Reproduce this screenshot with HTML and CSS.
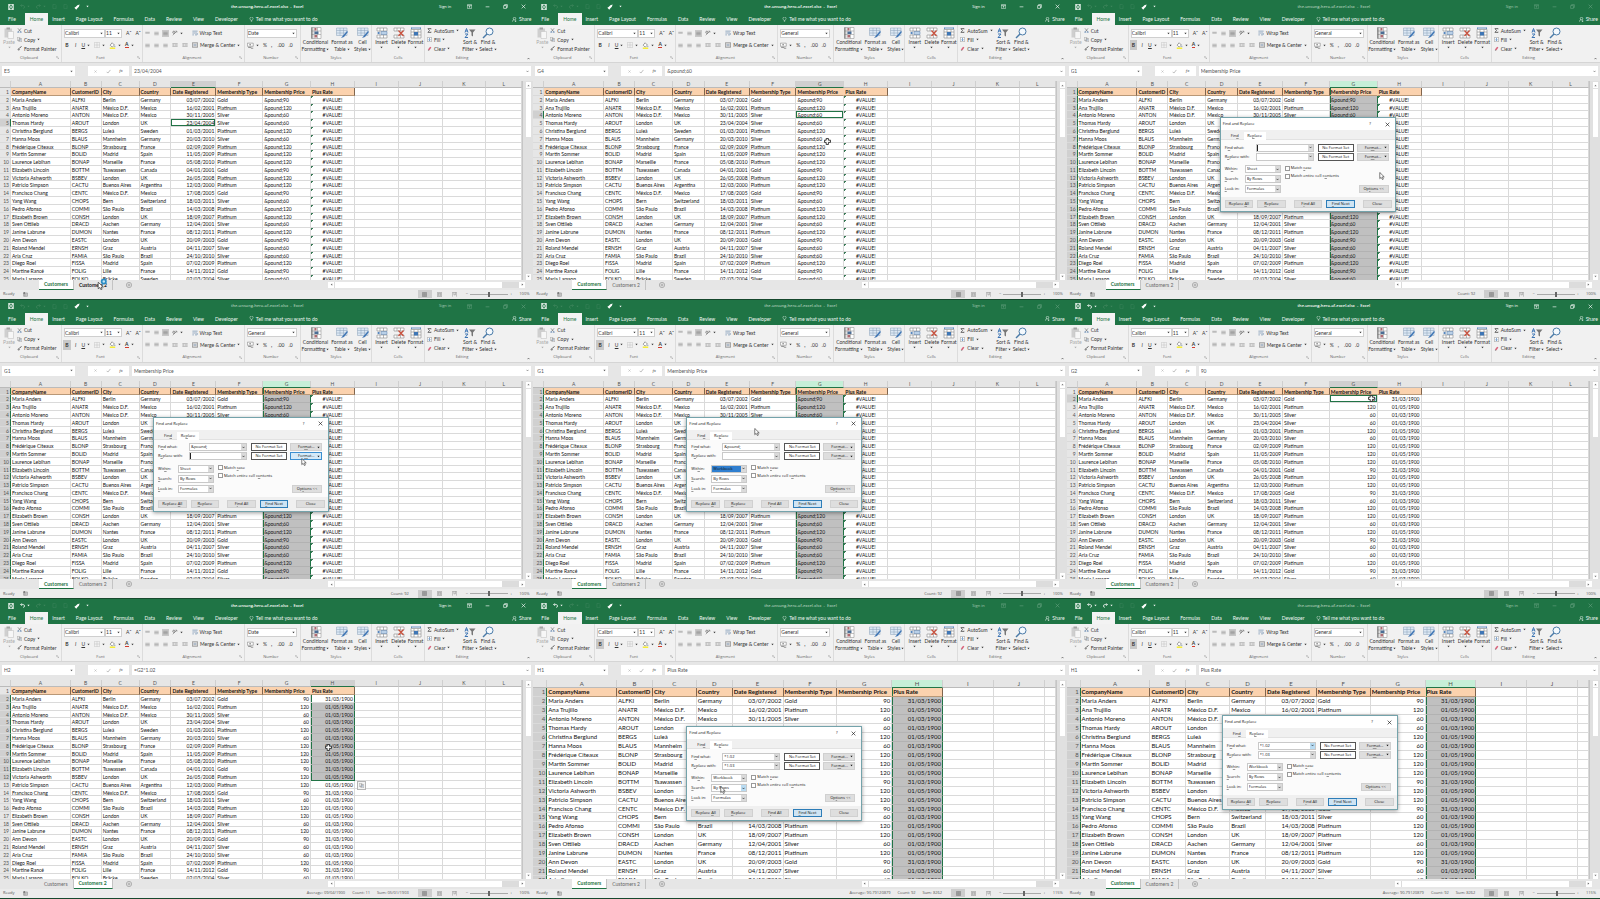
FILE: index.html
```html
<!DOCTYPE html>
<html lang="en">
<head>
    <meta charset="UTF-8">
    <meta name="viewport" content="width=device-width">
    <title>the-unsung-hero-of-excel.xlsx - Excel</title>
    <link rel="stylesheet" href="styles.css">
</head>
<body>

<svg class="sprite" aria-hidden="true">
    <symbol id="save" viewBox="0 0 16 16"><path d="M1 1h14v14H1z M4 1v5h8V1 M4 15v-5h8v5" fill="none" stroke="currentColor" stroke-width="2"/></symbol>
    <symbol id="undo" viewBox="0 0 16 16"><path d="M6 1L2 5l4 4M2 5h8a4 4 0 0 1 0 9" fill="none" stroke="currentColor" stroke-width="2.4"/></symbol>
    <symbol id="redo" viewBox="0 0 16 16"><path d="M10 1l4 4-4 4M14 5H6a4 4 0 0 0 0 9" fill="none" stroke="currentColor" stroke-width="2.4"/></symbol>
    <symbol id="page" viewBox="0 0 16 16"><path d="M3 1h7l3 4v10H3z" fill="none" stroke="currentColor" stroke-width="1.6"/></symbol>
    <symbol id="brush" viewBox="0 0 16 16"><path d="M15 1L9 3 5 7l4 4 4-4zM5 7L1 10l5 5 3-4z" fill="currentColor"/></symbol>
    <symbol id="caret" viewBox="0 0 8 8"><path d="M1 2h6L4 6z" fill="currentColor"/></symbol>
    <symbol id="chevron" viewBox="0 0 8 8"><path d="M1 2l3 3 3-3" fill="none" stroke="currentColor" stroke-width="1.6"/></symbol>
    <symbol id="ribbonopt" viewBox="0 0 16 16"><path d="M1 2h14v12H1zM1 5h14M8 12V7M5.500 9.500L8 7l2.500 2.500" fill="none" stroke="currentColor" stroke-width="1.600"/></symbol>
    <symbol id="min" viewBox="0 0 16 16"><path d="M2 9h12" stroke="currentColor" stroke-width="2"/></symbol>
    <symbol id="restore" viewBox="0 0 16 16"><path d="M2 5h9v9H2zM5 5V2h9v9h-3" fill="none" stroke="currentColor" stroke-width="2"/></symbol>
    <symbol id="close" viewBox="0 0 16 16"><path d="M2 2l12 12M14 2L2 14" stroke="currentColor" stroke-width="2"/></symbol>
    <symbol id="bulb" viewBox="0 0 12 16"><path d="M4 11c0-2-3-3-3-6a5 5 0 0 1 10 0c0 3-3 4-3 6zM4 14h4" fill="none" stroke="currentColor" stroke-width="1.500"/></symbol>
    <symbol id="person" viewBox="0 0 16 16"><circle cx="8" cy="5" r="4" fill="none" stroke="currentColor" stroke-width="1.800"/><path d="M1 15c0-4 3-6 6-6M11 11v5M14 13h-5" fill="none" stroke="currentColor" stroke-width="1.800"/></symbol>
    <symbol id="paste" viewBox="0 0 20 24"><path d="M1 3h15v18H1z" fill="#cfcfcf"/><path d="M5 1h7v4H5z" fill="#a5a5a5"/><path d="M8 9h11v14H8z" fill="#f7f7f7" stroke="#bdbdbd"/></symbol>
    <symbol id="cut" viewBox="0 0 16 16"><path d="M3 1l8 10M13 1L5 11" stroke="#555" stroke-width="1.600"/><circle cx="4" cy="13" r="2" fill="none" stroke="#4472a8" stroke-width="1.600"/><circle cx="12" cy="13" r="2" fill="none" stroke="#4472a8" stroke-width="1.600"/></symbol>
    <symbol id="copy" viewBox="0 0 16 16"><path d="M1 1h8v10H1zM6 5h9v10H6z" fill="#fff" stroke="#777" stroke-width="1.400"/><path d="M8 8h5M8 11h5" stroke="#4472a8"/></symbol>
    <symbol id="painter" viewBox="0 0 16 16"><path d="M14 1L7 8" stroke="#444" stroke-width="3"/><path d="M5 6l5 4-4 5-5-3z" fill="#8a8a8a"/></symbol>
    <symbol id="lines" viewBox="0 0 16 12"><path d="M1 2h14M1 6h14M1 10h14" stroke="#777" stroke-width="1.500"/></symbol>
    <symbol id="linestop" viewBox="0 0 16 12"><path d="M1 2h14M1 5h14" stroke="#777" stroke-width="1.500"/></symbol>
    <symbol id="angle" viewBox="0 0 16 16"><path d="M2 14L13 3M9 3h4v4" fill="none" stroke="#777" stroke-width="1.600"/><circle cx="5" cy="6" r="3" fill="none" stroke="#555" stroke-width="1.600"/></symbol>
    <symbol id="wrap" viewBox="0 0 16 16"><path d="M1 3h14M1 8h11a2 2 0 0 1 0 5H8M1 13h4" fill="none" stroke="#5b7da5" stroke-width="1.600"/></symbol>
    <symbol id="merge" viewBox="0 0 18 16"><path d="M1 1h16v14H1zM1 5h16M1 11h16" fill="#fff" stroke="#555" stroke-width="1.400"/><path d="M5 8h8" stroke="#4472a8" stroke-width="1.600"/></symbol>
    <symbol id="indent" viewBox="0 0 18 12"><path d="M1 2h16M1 10h16M8 6h9M5 4L2 6l3 2" fill="none" stroke="#777" stroke-width="1.400"/></symbol>
    <symbol id="borders" viewBox="0 0 16 16"><path d="M1 1h14v14H1zM8 1v14M1 8h14" fill="none" stroke="#b5b5b5"/></symbol>
    <symbol id="fill" viewBox="0 0 16 18"><path d="M7 2l6 6-6 5-5-5z" fill="#fff" stroke="#555" stroke-width="1.400"/><path d="M14 9l1.500 3h-3z" fill="#4472a8"/><path d="M1 14h14v4H1z" fill="#f5ec3a"/></symbol>
    <symbol id="coins" viewBox="0 0 18 16"><path d="M1 2h15v8H1z" fill="#fff" stroke="#777" stroke-width="1.400"/><circle cx="8" cy="6" r="2" fill="#777"/><path d="M3 13h8M10 15h6" stroke="#777" stroke-width="2"/></symbol>
    <symbol id="cond" viewBox="0 0 24 24"><path d="M3 1h19v22H3zM8 1v22M15 1v22M3 8h19M3 15h19" fill="#fff" stroke="#999" stroke-width="1.200"/><path d="M9 2h4v5H9zM9 16h5v5H9z" fill="#b06a70"/><path d="M9 9h8v5H9z" fill="#4b6d94"/><path d="M4 1v22" stroke="#666" stroke-width="2"/></symbol>
    <symbol id="ftable" viewBox="0 0 24 24"><path d="M1 2h21v15H1z" fill="#dbe7f3" stroke="#8aa0b8"/><path d="M1 7h21M1 12h21M8 2v15M15 2v15" stroke="#8aa0b8"/><path d="M23 7l-9 10-4 5 6-2 7-9z" fill="#3f76b5"/></symbol>
    <symbol id="insert" viewBox="0 0 24 24"><path d="M2 2h20v6H2zM2 16h20v6H2zM8 2v6M15 2v6M8 16v6M15 16v6" fill="#fff" stroke="#8f8f8f" stroke-width="1.300"/><path d="M10 9h12v6H10z" fill="#b9d0e8" stroke="#5a7ea8"/><path d="M7 9l-5 3 5 3z" fill="#3f76b5"/></symbol>
    <symbol id="delete" viewBox="0 0 24 24"><path d="M2 2h20v6H2zM2 16h20v6H2zM8 2v6M15 2v6M8 16v6M15 16v6" fill="#fff" stroke="#8f8f8f" stroke-width="1.300"/><path d="M11 7l10 11M21 7L11 18" stroke="#c8503c" stroke-width="2.500"/></symbol>
    <symbol id="format" viewBox="0 0 24 24"><path d="M2 5h20v17H2zM2 10h20M2 16h20M8 5v17M16 5v17" fill="#fff" stroke="#8f8f8f" stroke-width="1.300"/><path d="M8 10h8v7H8z" fill="#3f76b5"/><path d="M3 1v3M21 1v3M3 2h18" stroke="#3f76b5" stroke-width="1.500"/></symbol>
    <symbol id="sigma" viewBox="0 0 16 16"><path d="M13 4V2H3l5 6-5 6h10v-2" fill="none" stroke="#333" stroke-width="2.200"/></symbol>
    <symbol id="filldown" viewBox="0 0 16 16"><path d="M1 1h14v14H1z" fill="#fff" stroke="#777" stroke-width="1.500"/><path d="M8 3v8M4.500 8L8 12l3.500-4" fill="none" stroke="#3f76b5" stroke-width="2"/></symbol>
    <symbol id="eraser" viewBox="0 0 16 16"><path d="M10 2l4 3-7 9-4-3z" fill="#d9617a"/><path d="M3 11l4 3-1 1H3z" fill="#888"/></symbol>
    <symbol id="sort" viewBox="0 0 24 24"><path d="M2 11L5 3l3 8M3 8h4M2 14h6l-6 7h6" fill="none" stroke="#3f76b5" stroke-width="2"/><path d="M10 5h13l-5 6v8l-3-2v-6z" fill="#777"/></symbol>
    <symbol id="find" viewBox="0 0 24 24"><circle cx="15" cy="9" r="7" fill="#f4f9fd" stroke="#4a7ba8" stroke-width="2"/><path d="M10 14l-8 8" stroke="#4a7ba8" stroke-width="3"/></symbol>
    <symbol id="launcher" viewBox="0 0 8 8"><path d="M1 5V1h4M3 3l4 4M7 4v3H4" fill="none" stroke="#888"/></symbol>
    <symbol id="check" viewBox="0 0 16 16"><path d="M2 9l4 4 8-10" fill="none" stroke="currentColor" stroke-width="2"/></symbol>
    <symbol id="plus" viewBox="0 0 16 16"><circle cx="8" cy="8" r="7" fill="none" stroke="#888" stroke-width="1.500"/><path d="M8 4v8M4 8h8" stroke="#888" stroke-width="1.500"/></symbol>
    <symbol id="macro" viewBox="0 0 16 16"><path d="M2 3h12v11H2zM2 6h12M6 6v8M2 10h12" fill="none" stroke="#777" stroke-width="1.500"/><circle cx="4" cy="3" r="3" fill="#777"/></symbol>
    <symbol id="gridview" viewBox="0 0 16 16"><path d="M1 1h14v14H1zM1 6h14M1 10h14M6 1v14M10 1v14" fill="none" stroke="#666" stroke-width="1.400"/></symbol>
    <symbol id="pageview" viewBox="0 0 16 16"><path d="M1 1h14v14H1zM4 4h8v8H4zM4 7h8" fill="none" stroke="#777" stroke-width="1.400"/></symbol>
    <symbol id="breakview" viewBox="0 0 16 16"><path d="M1 15V1h14v14M6 1v8h5V1" fill="none" stroke="#777" stroke-width="1.400"/></symbol>
    <symbol id="arrow" viewBox="0 0 12 18"><path d="M1 1v14l3-3 3 5 2-1-2-5h4z" fill="#fff" stroke="#222" stroke-width="1.300"/></symbol>
    <symbol id="cross" viewBox="0 0 16 16"><path d="M5 1h5v4h5v5h-5v5H5v-5H1V5h4z" fill="#fff" stroke="#222" stroke-width="2"/></symbol>
    <symbol id="busy" viewBox="0 0 24 28"><path d="M2 10v15l4-3 2 5 3-1-2-5h5z" fill="#fff" stroke="#222" stroke-width="1.500"/><circle cx="15" cy="8" r="5" fill="#bfe4f5" stroke="#2a8cc4" stroke-width="4"/></symbol>
</svg>

<main class="frames" id="frames"></main>

<script src="script.js"></script>
</body>
</html>
```

FILE: styles.css
```css
* {
    box-sizing: border-box;
}

body {
    margin: 0;
    font-family: Lato, "Open Sans", sans-serif;
    font-size: 5px;
    line-height: 8px;
    color: #333;
}

button, input, select {
    font: inherit;
    color: inherit;
    margin: 0;
    padding: 0;
    border: 0;
    border-radius: 0;
    background: none;
    appearance: none;
    min-width: 0;
    outline: none;
}

button {
    white-space: nowrap;
    display: flex;
    align-items: center;
    justify-content: center;
}

svg {
    display: block;
    flex: none;
}

.sprite {
    position: absolute;
    width: 0;
    height: 0;
}

.frames {
    display: grid;
    grid-template-columns: repeat(3, minmax(0, 1fr));
    grid-template-rows: repeat(3, minmax(0, 1fr));
    height: 100vh;
}

.excel {
    position: relative;
    display: flex;
    flex-direction: column;
    overflow: hidden;
    background: #e6e6e6;
    border-bottom: 1px solid #17492e;
}

/* icon sizes */
.i3 { width: 3px; height: 3px; }
.i5 { width: 5px; height: 5px; }
.i6 { width: 6px; height: 6px; }
.i7 { width: 7px; height: 7px; }
.i12 { width: 12px; height: 12px; }

/* title bar */
.titlebar {
    flex: 0 0 13px;
    display: grid;
    grid-template-columns: 1fr auto 1fr;
    align-items: center;
    padding: 0 7px 0 8px;
    background: #1f7445;
    color: #fff;
    font-family: "Open Sans", sans-serif;
    font-size: 4px;
}

.quick {
    display: flex;
    align-items: center;
    gap: 6px;
}

.quick .off { color: #3f875e; }

.quick button { gap: 2px; }

.doc { font-weight: 600; }

.winbtns {
    display: flex;
    align-items: center;
    justify-content: flex-end;
    gap: 13px;
}

.winbtns .signin { margin-right: 3px; }

.inactive .doc, .inactive .winbtns { color: #a5c9b3; }

.inactive .winbtns svg { opacity: .5; }

/* ribbon tabs */
.tabs {
    flex: 0 0 12px;
    display: flex;
    align-items: stretch;
    gap: 11px;
    padding: 0 2px 0 8px;
    background: #1f7445;
    color: #f0f7f3;
}

.tabs button { flex: none; }

.tabs .home {
    padding: 0 5px;
    margin: 0 -7px 0 -2px;
    background: #f3f3f3;
    color: #1f7445;
}

.tabs .tell, .tabs .share { gap: 2px; }

.tabs .share { margin-left: auto; }

/* ribbon */
.ribbon {
    flex: 0 0 37px;
    display: flex;
    background: #f1f1f1;
    border-bottom: 1px solid #d5d5d5;
}

.group {
    flex: none;
    display: flex;
    flex-direction: column;
    border-right: 1px solid #dcdcdc;
}

.group.clipboard { width: 62px; }
.group.font { width: 81px; }
.group.alignment { width: 102px; }
.group.number { width: 56px; }
.group.styles { width: 71px; }
.group.cells { width: 53px; }
.group.editing { width: 74px; border: 0; }

.gbody {
    flex: 1;
    display: flex;
    padding: 1px 2px 0;
}

.glabel {
    flex: 0 0 9px;
    display: flex;
    align-items: center;
    padding: 0 2px;
    font-family: "Open Sans", sans-serif;
    font-size: 4px;
    color: #666;
}

.glabel span {
    flex: 1;
    text-align: center;
}

.stack {
    display: flex;
    flex-direction: column;
}

.stack button {
    height: 9px;
    justify-content: flex-start;
    gap: 2px;
}

.big {
    flex-direction: column;
    justify-content: flex-start;
    padding-top: 1px;
    line-height: 7px;
}

.big span { display: flex; align-items: center; gap: 1px; }

.clipboard .gbody { padding-left: 1px; }
.clipboard .big { width: 16px; color: #aaa; }
.styles .gbody { padding: 1px 0 0; }
.styles .big { width: 17px; }
.styles .big:nth-child(1) { width: 29px; }
.styles .big:nth-child(2) { width: 24px; }
.cells .gbody { padding: 1px 0 0 1px; }
.cells .big { width: 17px; }
.editing .stack { width: 34px; }
.editing .big { width: 18px; }

.rows {
    flex: 1;
    display: flex;
    flex-direction: column;
    padding-top: 1px;
}

.row {
    height: 12px;
    display: flex;
    align-items: center;
    gap: 4px;
}

.row button { gap: 2px; }

.on { background: #c8c8c8; padding: 1px; margin: -1px; }

.drop {
    display: flex;
    align-items: center;
    height: 9px;
    border: 1px solid #cfcfcf;
    background: #fff;
    padding-right: 1px;
}

.drop select { flex: 1; width: 100%; }

.drop.face { width: 41px; }
.drop.size { width: 17px; margin-left: -4px; }
.drop.kind { width: 50px; }

.red { border-bottom: 1px solid #d23b2c; line-height: 5px; font-weight: bold; }

.collapse { margin: auto 3px 2px auto; transform: rotate(180deg); }

/* formula bar */
.formula {
    flex: 0 0 18px;
    display: flex;
    align-items: center;
    padding: 0 2px 2px;
    gap: 3px;
}

.box {
    display: flex;
    align-items: center;
    height: 10px;
    background: #fff;
    padding: 0 2px;
    color: #555;
}

.box input { flex: 1; width: 100%; }

.box.name { width: 73px; }
.box.fx { width: 41px; margin-left: 10px; justify-content: space-around; color: #999; }
.box.value { flex: 1; }
.fx em { color: #555; font-family: "Liberation Serif", serif; }

/* sheet */
.sheet {
    flex: 1 1 0;
    min-height: 0;
    display: flex;
    overflow: hidden;
}

.table {
    flex: 1;
    min-width: 0;
    display: flex;
    flex-direction: column;
    border-spacing: 0;
    color: #111;
}

.table thead { flex: 0 0 7px; display: block; }

.table tbody {
    flex: 0 0 calc(100% - 4px);
    min-height: 0;
    display: grid;
    grid-auto-rows: minmax(0, 1fr);
    background: #fff;
}

.table tr {
    display: grid;
    grid-template-columns: 11fr 60fr 31fr 38fr 32fr 45fr 47fr 48fr 44fr 44fr 44fr 44fr 36fr;
    grid-template-rows: minmax(0, 1fr);
    min-height: 0;
}

.table th, .table td {
    min-width: 0;
    min-height: 0;
    padding: 0 1px;
    border-right: 1px solid #dadada;
    border-bottom: 1px solid #dadada;
    font-weight: normal;
    text-align: left;
    white-space: nowrap;
    line-height: 8px;
}

.table thead th {
    height: 7px;
    line-height: 6px;
    text-align: center;
    background: #e6e6e6;
    border-right-color: #cfcfcf;
    border-bottom-color: #bbb;
    color: #555;
}

.table tbody th {
    background: #e6e6e6;
    color: #555;
    text-align: right;
}

.table .titles td {
    background: #fbd2ae;
    border-right-color: #80654e;
    border-bottom-color: #b99877;
    font-weight: bold;
}

.table .titles td:nth-child(8) { border-right-color: #fbd2ae; }

.table .titles td.blank {
    background: #fff;
    border-color: #dadada;
}

.table .num { text-align: right; }

.table .err {
    text-align: center;
    background: linear-gradient(135deg, #3b7a57 2px, transparent 2px);
}

.table .picked { background: #c0c0c0; border-bottom-color: #b2b2b2; }

.table .colpick { border-right-color: #217346; box-shadow: inset 1px 0 #217346; }

.table .lastpick { border-bottom-color: #217346; }

.table td.active { box-shadow: inset 0 0 0 1px #217346; }

.table thead .near { background: #d0d0d0; border-bottom-color: #217346; }

.table thead .whole { background: #c6efd8; }

.table tbody th.near { background: #d0d0d0; border-right-color: #217346; }

/* 115% zoom */
.zoomed .table { font-size: 6px; }
.zoomed .table thead { flex-basis: 8px; }
.zoomed .table thead th { height: 8px; line-height: 7px; }
.zoomed .table tbody { flex-basis: calc(100% - 2px); }
.zoomed .table tr { grid-template-columns: 14fr 70fr 36fr 44fr 36fr 51fr 54fr 55fr 51fr 51fr 51fr 11fr; }

.vscroll {
    flex: 0 0 9px;
    display: flex;
    flex-direction: column;
    align-items: center;
    justify-content: space-between;
    padding: 1px 2px 0 3px;
    border-left: 1px solid #c5c5c5;
    background: #e0e0e0;
    color: #777;
}

.vscroll button { width: 5px; height: 6px; background: #fff; }
.vscroll .up svg { transform: rotate(180deg); }
.vscroll .thumb { width: 5px; height: 48px; background: #fff; margin: 1px 0 auto; }

/* sheet tabs */
.sheets {
    flex: 0 0 10px;
    display: flex;
    align-items: center;
    padding: 0 8px 0 39px;
    color: #666;
}

.sheets .tab {
    height: 10px;
    padding: 0 5px;
    border-right: 1px solid #c3c3c3;
}

.sheets .tab.current {
    background: #fff;
    color: #1f7445;
    font-weight: bold;
    border-bottom: 1px solid #1f7445;
}

.sheets .tab.hover { color: #222; font-weight: bold; }

.sheets .add { margin-left: 13px; }

.hscroll {
    width: 197px;
    margin-left: auto;
    display: flex;
    align-items: center;
    justify-content: space-between;
    background: #dcdcdc;
}

.hscroll button { width: 6px; height: 6px; background: #fff; }
.hscroll .left svg { transform: rotate(90deg); }
.hscroll .right svg { transform: rotate(-90deg); }
.hscroll .thumb { width: 167px; height: 6px; background: #fff; margin: 0 auto 0 1px; }

/* status bar */
.status {
    flex: 0 0 9px;
    display: flex;
    align-items: center;
    gap: 9px;
    padding: 0 3px;
    background: #ececec;
    font-family: "Open Sans", sans-serif;
    font-size: 4px;
    color: #555;
}

.status .sums { margin-left: auto; display: flex; gap: 7px; }

.views { display: flex; align-items: center; gap: 1px; }
.views button { width: 14px; height: 8px; }
.views .sel { background: #cdcdcd; }

.zoom { display: flex; align-items: center; gap: 2px; margin-left: -5px; }
.zoom input { width: 38px; height: 8px; background: linear-gradient(#aaa, #aaa) center / 100% 1px no-repeat; }
.zoom input::-webkit-slider-thumb { appearance: none; width: 2px; height: 5px; background: #666; }
.zoom output { margin-left: 5px; width: 11px; }

/* find and replace */
.dialog {
    position: absolute;
    width: 176px;
    background: #fbfbfb;
    border: 1px solid #74a3ab;
    box-shadow: 0 1px 4px rgba(0, 0, 0, .4);
    font-family: "Open Sans", sans-serif;
    font-size: 4px;
    color: #111;
}

.dialog u { text-decoration-color: #999; }

.dialog header {
    display: flex;
    align-items: center;
    height: 12px;
    padding: 0 5px 0 2px;
    background: #fff;
}

.dialog header span { flex: 1; }
.dialog header button { width: 5px; }
.dialog header button + button { margin-left: 12px; }

.dtabs {
    display: flex;
    padding: 2px 5px 0;
    height: 10px;
    background: #f0f0f0;
    border-bottom: 1px solid #e2e2e2;
}

.dtabs button { width: 18px; height: 8px; }
.dtabs .current { width: 22px; background: #fff; }

.dbody { padding: 3px 5px 3px 4px; }

.line { display: flex; align-items: center; height: 9px; }
.line label { width: 31px; white-space: nowrap; }

.combo {
    display: flex;
    align-items: center;
    height: 8px;
    background: #fff;
    border: 1px solid #c9c9c9;
}

.combo input, .combo select { flex: 1; width: 100%; height: 6px; padding: 0 1px; line-height: 6px; }
.combo button { width: 5px; height: 6px; background: #dadada; }
.combo button.lit { background: #b9dcf3; }
.combo.text { width: 58px; }
.combo.text.focus input { border-left: 1px solid #222; }
.combo.pick { width: 36px; }
.combo.pick.lit select { background: #2f7fd0; }

.noformat {
    width: 36px;
    height: 8px;
    margin-left: 4px;
    line-height: 6px;
    border: 1px solid #555;
    background: #fff;
    text-align: center;
    white-space: nowrap;
}

.btn {
    height: 8px;
    background: #dedede;
    border: 1px solid #d0d0d0;
    line-height: 6px;
}

.btn.fmt { width: 32px; margin-left: 3px; justify-content: space-between; padding: 0 1px 0 7px; }
.btn.lit { background: #d5eaf8; border-color: #3c8fd0; }

.opts { display: flex; padding-top: 3px; }
.opts .line { height: 10px; }
.opts .line label { width: 20px; }

.checks { flex: 1; padding-left: 4px; display: flex; flex-direction: column; }
.checks label { display: flex; align-items: center; gap: 1px; height: 8px; white-space: nowrap; }
.checks input { width: 5px; height: 5px; border: 1px solid #999; background: #fff; }
.checks .btn { width: 30px; margin: auto 1px 1px auto; }

.dialog footer {
    display: flex;
    gap: 4px;
    padding: 3px 3px 3px 4px;
    background: #f0f0f0;
}

.dialog footer button { width: 29px; }
.dialog footer button:nth-child(3), .dialog footer button:last-child { margin-left: 4px; }
.dialog footer button:nth-child(4) { background: #cfe4f3; border-color: #2d7db8; }

.cursor { position: absolute; width: 6px; height: 8px; }
.cursor.cross { width: 7px; height: 7px; }
.cursor.busy { width: 11px; height: 12px; }

.pasteopt {
    position: absolute;
    width: 9px;
    height: 9px;
    border: 1px solid #b5b5b5;
    background: #f3f3f3;
}
```

FILE: script.js
```js
const people = `Maria Anders,ALFKI,Berlin,Germany,03/07/2002,Gold
Ana Trujillo,ANATR,México D.F.,Mexico,16/02/2001,Platinum
Antonio Moreno,ANTON,México D.F.,Mexico,30/11/2005,Silver
Thomas Hardy,AROUT,London,UK,23/04/2004,Silver
Christina Berglund,BERGS,Luleå,Sweden,01/03/2001,Platinum
Hanna Moos,BLAUS,Mannheim,Germany,20/03/2010,Silver
Frédérique Citeaux,BLONP,Strasbourg,France,02/09/2009,Platinum
Martin Sommer,BOLID,Madrid,Spain,11/05/2009,Platinum
Laurence Lebihan,BONAP,Marseille,France,05/08/2010,Platinum
Elizabeth Lincoln,BOTTM,Tsawassen,Canada,04/01/2001,Gold
Victoria Ashworth,BSBEV,London,UK,26/05/2008,Platinum
Patricio Simpson,CACTU,Buenos Aires,Argentina,12/03/2000,Platinum
Francisco Chang,CENTC,México D.F.,Mexico,17/08/2005,Gold
Yang Wang,CHOPS,Bern,Switzerland,18/03/2011,Silver
Pedro Afonso,COMMI,São Paulo,Brazil,14/03/2008,Platinum
Elizabeth Brown,CONSH,London,UK,18/09/2007,Platinum
Sven Ottlieb,DRACD,Aachen,Germany,12/04/2001,Silver
Janine Labrune,DUMON,Nantes,France,08/12/2011,Platinum
Ann Devon,EASTC,London,UK,20/09/2003,Gold
Roland Mendel,ERNSH,Graz,Austria,04/11/2007,Silver
Aria Cruz,FAMIA,São Paulo,Brazil,24/10/2010,Silver
Diego Roel,FISSA,Madrid,Spain,07/02/2009,Platinum
Martine Rancé,FOLIG,Lille,France,14/11/2012,Gold
Maria Larsson,FOLKO,Bräcke,Sweden,02/03/2004,Silver`.split('\n').map(l => l.split(','));

const titles = ['CompanyName', 'CustomerID', 'City', 'Country', 'Date Registered', 'Membership Type', 'Membership Price', 'Plus Rate'];
const price = {Gold: 90, Platinum: 120, Silver: 60};
const rate = {Gold: '31/03/1900', Platinum: '01/05/1900', Silver: '01/03/1900'};

// pick: [column, first row, last row]
const frames = [
  {cell: 'E5', value: '23/04/2004', kind: 'Date', pick: ['E', 5, 5], raw: true, hover: true, cursor: ['busy', 97, 278]},
  {cell: 'G4', value: '&pound;60', pick: ['G', 4, 4], raw: true, cursor: ['cross', 291, 138]},
  {cell: 'G1', value: 'Membership Price', pick: ['G', 1, 99], raw: true, sums: ['Count: 92'],
    dialog: {x: 153, y: 117, find: '', replace: '', within: 'Sheet', focus: 1}, cursor: ['arrow', 312, 172]},
  {cell: 'G1', value: 'Membership Price', pick: ['G', 1, 99], raw: true, sums: ['Count: 92'],
    dialog: {x: 153, y: 117, find: '&pound;', replace: '', within: 'Sheet', focus: 2, fmt: true}, cursor: ['arrow', 301, 158]},
  {cell: 'G1', value: 'Membership Price', pick: ['G', 1, 99], raw: true, sums: ['Count: 92'],
    dialog: {x: 153, y: 117, find: '&pound;', replace: '', within: 'Workbook', lit: true}, cursor: ['arrow', 221, 128]},
  {cell: 'G2', value: '90', pick: ['G', 2, 2], undo: true, cursor: ['cross', 301, 95]},
  {cell: 'H2', value: '=G2*1.02', kind: 'Date', pick: ['H', 2, 12], undo: true, second: true,
    sums: ['Average: 09/04/1900', 'Count: 11', 'Sum: 05/01/1903'], cursor: ['cross', 325, 145], paste: true},
  {cell: 'H1', value: 'Plus Rate', pick: ['H', 1, 99], undo: true, zoomed: true,
    sums: ['Average: 90.79120879', 'Count: 92', 'Sum: 8262'],
    dialog: {x: 153, y: 127, find: '*1.02', replace: '*1.03', within: 'Workbook', search: true}, cursor: ['arrow', 187, 187]},
  {cell: 'H1', value: 'Plus Rate', pick: ['H', 1, 99], undo: true, redo: true, zoomed: true,
    sums: ['Average: 90.79120879', 'Count: 92', 'Sum: 8262'],
    dialog: {x: 155, y: 116, find: '*1.02', replace: '*1.03', within: 'Workbook', drop: true}}
];

const icon = (name, size = 'i5') => `<svg class="${size}"><use href="#${name}"/></svg>`;
const esc = s => s.replace(/&/g, '&amp;');

function ribbon(f) {
  const launch = icon('launcher', 'i3');
  const big = (name, a, b) => `<button class="big">${icon(name, 'i12')}<span>${a}</span><span>${b} ${icon('caret', 'i3')}</span></button>`;
  return `<div class="ribbon">
    <div class="group clipboard"><div class="gbody">
      <button class="big">${icon('paste', 'i12')}<span>Paste</span>${icon('caret', 'i3')}</button>
      <div class="stack"><button>${icon('cut')}Cut</button><button>${icon('copy')}Copy ${icon('caret', 'i3')}</button><button>${icon('painter')}Format Painter</button></div>
    </div><div class="glabel"><span>Clipboard</span>${launch}</div></div>
    <div class="group font"><div class="gbody"><div class="rows">
      <div class="row"><div class="drop face"><select aria-label="Font"><option>Calibri</option></select>${icon('caret', 'i3')}</div>
        <div class="drop size"><select aria-label="Font size"><option>11</option></select>${icon('caret', 'i3')}</div><button>A&#710;</button><button>A&#711;</button></div>
      <div class="row"><button class="${/1$/.test(f.cell) ? 'on' : ''}"><b>&nbsp;B&nbsp;</b></button><button><i>&nbsp;I&nbsp;</i></button><button><u>U</u> ${icon('caret', 'i3')}</button>
        <button>${icon('borders', 'i6')}${icon('caret', 'i3')}</button><button>${icon('fill', 'i7')}${icon('caret', 'i3')}</button><button><span class="red">A</span>${icon('caret', 'i3')}</button></div>
    </div></div><div class="glabel"><span>Font</span>${launch}</div></div>
    <div class="group alignment"><div class="gbody"><div class="rows">
      <div class="row"><button>${icon('linestop')}</button><button>${icon('lines')}</button><button class="on">${icon('lines')}</button><button>${icon('angle', 'i6')}${icon('caret', 'i3')}</button><button>&nbsp;&nbsp;${icon('wrap', 'i6')}Wrap Text</button></div>
      <div class="row"><button>${icon('lines')}</button><button>${icon('lines')}</button><button>${icon('lines')}</button><button>${icon('indent', 'i6')}</button><button>${icon('indent', 'i6')}</button><button>${icon('merge', 'i6')}Merge &amp; Center ${icon('caret', 'i3')}</button></div>
    </div></div><div class="glabel"><span>Alignment</span>${launch}</div></div>
    <div class="group number"><div class="gbody"><div class="rows">
      <div class="row"><div class="drop kind"><select aria-label="Number format"><option>${f.kind || 'General'}</option></select>${icon('caret', 'i3')}</div></div>
      <div class="row"><button>${icon('coins', 'i7')}${icon('caret', 'i3')}</button><button>%</button><button><b>,</b></button><button>&nbsp;.00</button><button>.0</button></div>
    </div></div><div class="glabel"><span>Number</span>${launch}</div></div>
    <div class="group styles"><div class="gbody">${big('cond', 'Conditional', 'Formatting')}${big('ftable', 'Format as', 'Table')}${big('ftable', 'Cell', 'Styles')}</div><div class="glabel"><span>Styles</span></div></div>
    <div class="group cells"><div class="gbody">${big('insert', 'Insert', '')}${big('delete', 'Delete', '')}${big('format', 'Format', '')}</div><div class="glabel"><span>Cells</span></div></div>
    <div class="group editing"><div class="gbody">
      <div class="stack"><button>${icon('sigma')}AutoSum ${icon('caret', 'i3')}</button><button>${icon('filldown')}Fill ${icon('caret', 'i3')}</button><button>${icon('eraser')}Clear ${icon('caret', 'i3')}</button></div>
      ${big('sort', 'Sort &amp;', 'Filter')}${big('find', 'Find &amp;', 'Select')}
    </div><div class="glabel"><span>Editing</span></div></div>
    <button class="collapse" aria-label="Collapse">${icon('chevron', 'i3')}</button>
  </div>`;
}

function table(f) {
  const letters = 'ABCDEFGHIJKL'.slice(0, f.zoomed ? 11 : 12).split('');
  const [col, from, to] = f.pick;
  const whole = to === 99;
  let html = '<thead><tr><th></th>' + letters.map(l =>
    `<th class="${l === col ? 'near' + (whole ? ' whole' : '') : ''}">${f.zoomed && l === 'K' ? '' : l}</th>`).join('') + '</tr></thead><tbody>';
  const last = f.zoomed ? 22 : 25;
  for (let r = 1; r <= last; r++) {
    const p = people[r - 2];
    const picked = r >= from && r <= to;
    html += `<tr class="${r === 1 ? 'titles' : ''}"><th class="${picked ? 'near' : ''}">${r}</th>`;
    letters.forEach((l, c) => {
      const cls = [];
      let text = '';
      if (r === 1) {
        text = titles[c] || '';
      } else if (c < 6) {
        text = p[c];
        if (c === 4) cls.push('num');
      } else if (c === 6) {
        text = f.raw ? '&pound;' + price[p[5]] : price[p[5]];
        if (!f.raw) cls.push('num');
      } else if (c === 7) {
        text = f.raw ? '#VALUE!' : rate[p[5]];
        cls.push(f.raw ? 'err' : 'num');
      }
      if (c > 7) cls.push('blank');
      if (l === col && picked) {
        if (from === to) cls.push('active');
        else {
          cls.push('colpick');
          if (r > from) cls.push('picked');
          if (r === to) cls.push('lastpick');
        }
      }
      html += `<td class="${cls.join(' ')}">${esc(String(text))}</td>`;
    });
    html += '</tr>';
  }
  return `<table class="table">${html}</tbody></table>`;
}

function dialog(d, n) {
  const drop = (lit) => `<button class="${lit ? 'lit' : ''}" tabindex="-1" aria-label="Open">${icon('chevron', 'i3')}</button>`;
  const text = (id, label, value, focus, lit, fmt) => `<div class="line"><label for="${id}${n}">${label}</label>
    <div class="combo text ${focus ? 'focus' : ''}"><input id="${id}${n}" value="${esc(value)}">${drop(lit)}</div>
    <div class="noformat">No Format Set</div><button class="btn fmt ${fmt ? 'lit' : ''}"><span>For<u>m</u>at...</span>${icon('caret', 'i3')}</button></div>`;
  const pick = (id, label, value, lit, arrow) => `<div class="line"><label for="${id}${n}">${label}</label>
    <div class="combo pick ${lit ? 'lit' : ''}"><select id="${id}${n}"><option>${value}</option></select>${drop(arrow)}</div></div>`;
  return `<section class="dialog" style="left:${d.x}px;top:${d.y}px">
    <header><span>Find and Replace</span><button>?</button><button aria-label="Close">${icon('close', 'i5')}</button></header>
    <div class="dtabs"><button><span>Fin<u>d</u></span></button><button class="current"><span>Re<u>p</u>lace</span></button></div>
    <div class="dbody">
      ${text('find', 'Fi<u>n</u>d what:', d.find, d.focus === 1, d.drop)}
      ${text('repl', 'R<u>e</u>place with:', d.replace, d.focus === 2, false, d.fmt)}
      <div class="opts"><div>
        ${pick('within', 'Wit<u>h</u>in:', d.within, d.lit)}
        ${pick('search', '<u>S</u>earch:', 'By Rows', false, d.search)}
        ${pick('look', '<u>L</u>ook in:', 'Formulas')}
      </div><div class="checks">
        <label><input type="checkbox"><span>Match <u>c</u>ase</span></label>
        <label><input type="checkbox"><span>Match entire cell c<u>o</u>ntents</span></label>
        <button class="btn"><span>Op<u>t</u>ions &lt;&lt;</span></button>
      </div></div>
    </div>
    <footer><button class="btn"><span>Replace <u>A</u>ll</span></button><button class="btn"><span><u>R</u>eplace</span></button><button class="btn"><span>F<u>i</u>nd All</span></button><button class="btn"><span><u>F</u>ind Next</span></button><button class="btn">Close</button></footer>
  </section>`;
}

function frame(f, n) {
  const caret = icon('caret', 'i3');
  return `<section class="excel ${f.dialog ? 'inactive' : ''} ${f.zoomed ? 'zoomed' : ''}">
    <div class="titlebar">
      <div class="quick"><button aria-label="Save">${icon('save', 'i6')}</button><button class="${f.undo ? '' : 'off'}" aria-label="Undo">${icon('undo')}${caret}</button><button class="${f.redo ? '' : 'off'}" aria-label="Redo">${icon('redo')}${caret}</button>
        <button class="off" aria-label="New">${icon('page')}</button><button class="off" aria-label="Open">${icon('page')}</button><button aria-label="Brush">${icon('brush', 'i6')}</button><button aria-label="More">${caret}</button></div>
      <div class="doc">the-unsung-hero-of-excel.xlsx&nbsp; - &nbsp;Excel</div>
      <div class="winbtns"><span class="signin">Sign in</span>${icon('ribbonopt')}${icon('min')}${icon('restore')}${icon('close')}</div>
    </div>
    <nav class="tabs"><button>File</button><button class="home">Home</button><button>Insert</button><button>Page Layout</button><button>Formulas</button><button>Data</button><button>Review</button><button>View</button><button>Developer</button>
      <button class="tell">${icon('bulb')}Tell me what you want to do</button><button class="share">${icon('person')}Share</button></nav>
    ${ribbon(f)}
    <div class="formula">
      <div class="box name"><input aria-label="Name box" value="${f.cell}">${caret}</div>
      <div class="box fx">${icon('close', 'i3')}${icon('check', 'i5')}<em>fx</em></div>
      <div class="box value"><input aria-label="Formula" value="${esc(f.value)}">${icon('chevron', 'i3')}</div>
    </div>
    <div class="sheet">${table(f)}<div class="vscroll"><button class="up" aria-label="Up">${caret}</button><div class="thumb"></div><button aria-label="Down">${caret}</button></div></div>
    <div class="sheets"><button class="tab ${f.second ? '' : 'current'}">Customers</button><button class="tab ${f.second ? 'current' : ''} ${f.hover ? 'hover' : ''}">Customers 2</button><button class="add" aria-label="New sheet">${icon('plus', 'i6')}</button>
      <div class="hscroll"><button class="left" aria-label="Left">${caret}</button><div class="thumb"></div><button class="right" aria-label="Right">${caret}</button></div></div>
    <div class="status"><span>Ready</span>${icon('macro')}<div class="sums">${(f.sums || []).map(s => `<span>${s}</span>`).join('')}</div>
      <div class="views"><button class="sel" aria-label="Normal">${icon('gridview')}</button><button aria-label="Page layout">${icon('pageview')}</button><button aria-label="Page break">${icon('breakview')}</button></div>
      <div class="zoom"><span>&minus;</span><input type="range" aria-label="Zoom" value="${f.zoomed ? 55 : 50}"><span>+</span><output>${f.zoomed ? 115 : 100}%</output></div></div>
    ${f.dialog ? dialog(f.dialog, n) : ''}
    ${f.paste ? `<button class="pasteopt" style="left:357px;top:182px" aria-label="Paste options">${icon('copy')}</button>` : ''}
    ${f.cursor ? `<svg class="cursor ${f.cursor[0]}" style="left:${f.cursor[1]}px;top:${f.cursor[2]}px"><use href="#${f.cursor[0]}"/></svg>` : ''}
  </section>`;
}

document.getElementById('frames').innerHTML = frames.map(frame).join('');
```
